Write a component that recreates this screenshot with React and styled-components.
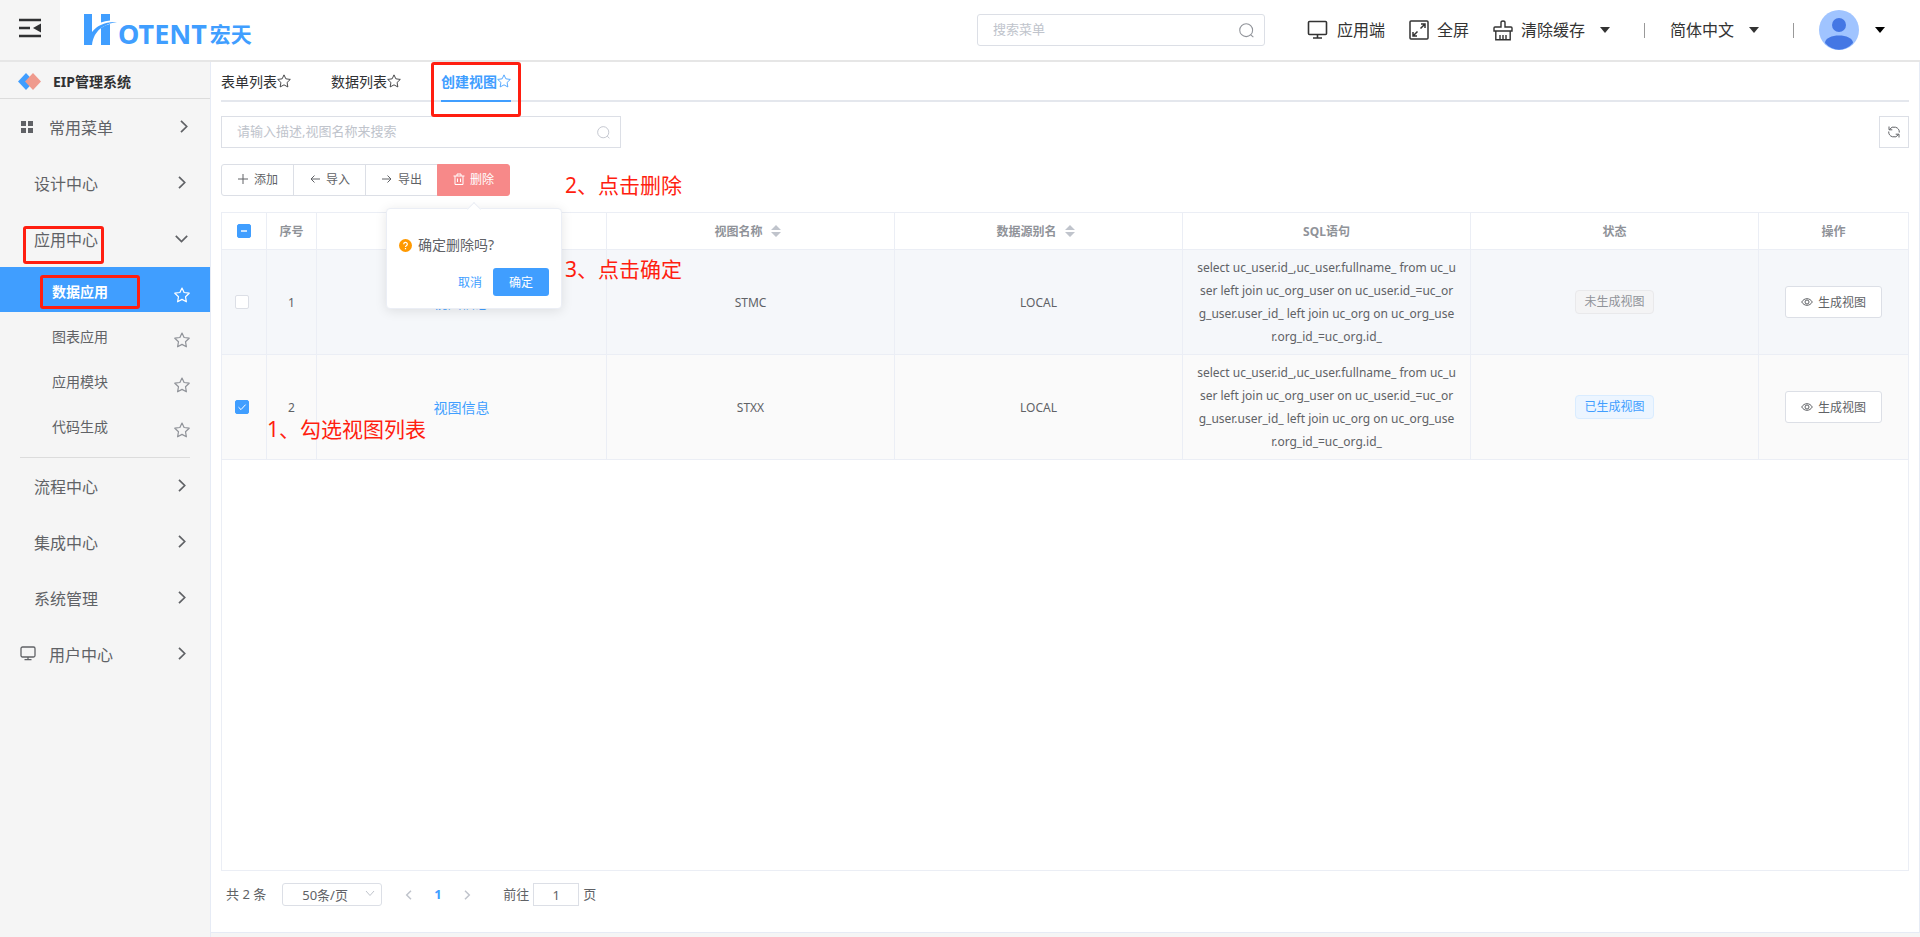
import React, { useState } from "react";
import styled, { createGlobalStyle, css } from "styled-components";

const GlobalStyle = createGlobalStyle`
  * {
    box-sizing: border-box;
  }
  body {
    margin: 0;
    color: #606266;
    background: #f5f5f5;
  }
  body, button, input, select {
    font-family: "Noto Sans", "Noto Sans CJK SC", sans-serif;
  }
  button {
    cursor: pointer;
  }
  a {
    color: inherit;
    text-decoration: none;
  }
`;

const Page = styled.div`
  min-height: 100vh;
  display: flex;
  flex-direction: column;
`;

const Header = styled.header`
  height: 62px;
  display: flex;
  align-items: center;
  background: #fff;
  border-bottom: 2px solid #e6e6e6;
  color: #333;
`;

const MenuToggle = styled.button`
  width: 60px;
  height: 60px;
  padding: 0;
  border: none;
  background: #f5f5f5;
`;

const Logo = styled.a`
  display: flex;
  align-items: center;
  margin-left: 24px;
  color: #409eff;
  font-weight: 700;
  line-height: 30px;
  .latin {
    font-size: 27px;
    margin-top: 8px;
  }
  .cjk {
    font-size: 21px;
    margin-top: 8px;
    margin-left: 3px;
  }
`;

const SearchBox = styled.label`
  width: ${(p) => p.$width};
  height: 32px;
  display: flex;
  align-items: center;
  padding: 0 10px 0 15px;
  border: 1px solid #dcdfe6;
  border-radius: ${(p) => p.$radius || "0"};
  background: #fff;
  input {
    flex: 1;
    min-width: 0;
    padding: 0 0 2px;
    border: none;
    outline: none;
    font-size: 13px;
    color: #606266;
    &::placeholder {
      color: #c0c4cc;
    }
  }
`;

const HeaderSearch = styled.div`
  margin-left: auto;
  margin-right: 42px;
`;

const HeaderAction = styled.button`
  display: flex;
  align-items: center;
  gap: 8px;
  margin-right: 24px;
  padding: 0;
  border: none;
  background: none;
  font-size: 16px;
  line-height: 24px;
  color: #333;
`;

const Caret = styled.span`
  margin-left: 7px;
  border: 5px solid transparent;
  border-top: 6px solid ${(p) => p.$color || "#333"};
  border-bottom: none;
`;

const Separator = styled.span`
  width: 1px;
  height: 15px;
  margin: 0 25px 0 10px;
  background: #999;
`;

const UserButton = styled.button`
  display: flex;
  align-items: center;
  gap: 9px;
  margin-right: 35px;
  padding: 0;
  border: none;
  background: none;
`;

const Body = styled.div`
  flex: 1;
  display: flex;
`;

const Sidebar = styled.nav`
  width: 211px;
  flex-shrink: 0;
  border-right: 1px solid #e6ebf5;
  background: #f5f5f5;
`;

const SystemTitle = styled.div`
  height: 37px;
  display: flex;
  align-items: center;
  gap: 12px;
  padding: 2px 0 0 18px;
  border-bottom: 1px solid #dcdcdc;
  font-size: 14px;
  font-weight: 700;
  color: #303133;
`;

const MenuItem = styled.button`
  position: relative;
  width: 100%;
  height: 56px;
  display: flex;
  align-items: center;
  padding: 0 ${(p) => (p.$wide ? "22px" : "24px")} 1px ${(p) => (p.$top ? "20px" : "34px")};
  border: none;
  background: none;
  font-size: 16px;
  color: #606266;
  .icon {
    width: 29px;
    display: flex;
  }
  .arrow {
    margin-left: auto;
  }
`;

const SubItem = styled.a`
  position: relative;
  height: 45px;
  display: flex;
  align-items: center;
  justify-content: space-between;
  padding: 3px 20px 0 52px;
  font-size: 14px;
  color: ${(p) => (p.$active ? "#fff" : "#606266")};
  background: ${(p) => (p.$active ? "#409eff" : "none")};
  font-weight: ${(p) => (p.$active ? 700 : 400)};
  svg {
    margin-top: 8px;
    color: ${(p) => (p.$active ? "#fff" : "#909399")};
  }
`;

const Divider = styled.hr`
  height: 1px;
  margin: 10px 20px 0;
  border: none;
  background: #dcdcdc;
`;

const Main = styled.main`
  flex: 1;
  min-width: 0;
  display: flex;
  flex-direction: column;
  margin-bottom: 4px;
  padding: 0 10px;
  border: 1px solid #e6ebf5;
  border-width: 0 1px 1px 0;
  background: #fff;
`;

const Tabs = styled.div`
  display: flex;
  gap: 40px;
  height: 40px;
  border-bottom: 2px solid #e4e7ed;
`;

const Tab = styled.a`
  position: relative;
  height: 40px;
  display: flex;
  align-items: center;
  font-size: 14px;
  color: ${(p) => (p.$active ? "#409eff" : "#303133")};
  border-bottom: 2px solid ${(p) => (p.$active ? "#409eff" : "transparent")};
  font-weight: ${(p) => (p.$active ? 700 : 400)};
`;

const Toolbar = styled.div`
  display: flex;
  justify-content: space-between;
  margin-top: 14px;
`;

const RefreshButton = styled.button`
  width: 30px;
  height: 32px;
  display: flex;
  align-items: center;
  justify-content: center;
  padding: 0;
  border: 1px solid #dcdfe6;
  background: #fff;
  color: #606266;
`;

const ButtonRow = styled.div`
  position: relative;
  align-self: flex-start;
  display: flex;
  margin: 16px 0;
`;

const ToolButton = styled.button`
  width: 73px;
  height: 32px;
  display: flex;
  align-items: center;
  justify-content: center;
  gap: 5px;
  padding: 0 0 2px;
  font-size: 12px;
  color: #606266;
  border: 1px solid #dcdfe6;
  background: #fff;
  & + & {
    margin-left: -1px;
  }
  &:first-child {
    border-radius: 3px 0 0 3px;
  }
  ${(p) =>
    p.$danger &&
    css`
      color: #fff;
      background: #f78989;
      border-color: #f78989;
      border-radius: 0 3px 3px 0;
    `}
`;

const Popover = styled.div`
  position: absolute;
  z-index: 5;
  top: 44px;
  right: -52px;
  width: 176px;
  padding: 26px 12px 12px;
  border: 1px solid #ebeef5;
  border-radius: 4px;
  background: #fff;
  box-shadow: 0 2px 12px rgba(0, 0, 0, 0.1);
  &::before {
    content: "";
    position: absolute;
    top: -5px;
    left: 82px;
    width: 9px;
    height: 9px;
    border: 1px solid #ebeef5;
    border-width: 1px 0 0 1px;
    background: #fff;
    transform: rotate(45deg);
  }
  p {
    display: flex;
    align-items: center;
    gap: 6px;
    margin: 0 0 13px;
    font-size: 14px;
    line-height: 20px;
  }
  footer {
    display: flex;
    justify-content: flex-end;
    gap: 11px;
  }
`;

const SmallButton = styled.button`
  height: 28px;
  padding: 0 ${(p) => (p.$primary ? "16px" : "0")};
  border: none;
  border-radius: 3px;
  font-size: 12px;
  color: ${(p) => (p.$primary ? "#fff" : "#409eff")};
  background: ${(p) => (p.$primary ? "#409eff" : "none")};
`;

const TableWrap = styled.div`
  position: relative;
  flex: 1;
  border: 1px solid #ebeef5;
`;

const Table = styled.table`
  width: 100%;
  table-layout: fixed;
  border-collapse: separate;
  border-spacing: 0;
  font-size: 12px;
  line-height: 23px;
  text-align: center;
  th,
  td {
    border-right: 1px solid #ebeef5;
    border-bottom: 1px solid #ebeef5;
    &:last-child {
      border-right: none;
    }
  }
  th {
    height: 37px;
    padding: 0;
    color: #909399;
    font-weight: 700;
  }
  td {
    padding: 6px 10px;
  }
  a {
    display: block;
    font-size: 14px;
    color: #409eff;
  }
`;

const Row = styled.tr`
  background: ${(p) => (p.$hover ? "#f5f7fa" : "#fafafa")};
`;

const SortHead = styled.span`
  display: inline-flex;
  align-items: center;
  gap: 8px;
  padding-right: 6px;
`;

const Checkbox = styled.input`
  appearance: none;
  display: block;
  width: 14px;
  height: 14px;
  margin: 0 auto;
  border: 1px solid #dcdfe6;
  border-radius: 2px;
  background: #fff;
  transform: translateX(${(p) => (p.$head ? "0" : "-2px")});
  &:checked {
    border-color: #409eff;
    background: #409eff
      url("data:image/svg+xml,%3Csvg xmlns='http://www.w3.org/2000/svg' viewBox='0 0 12 12'%3E%3Cpath d='M2.5 6.2 5 8.6 9.6 3.6' fill='none' stroke='white'/%3E%3C/svg%3E");
  }
  &:indeterminate {
    border-color: #409eff;
    background: linear-gradient(#c6e2ff, #c6e2ff) center / 6px 2px no-repeat #409eff;
  }
`;

const Tag = styled.span`
  display: inline-block;
  height: 24px;
  padding: 0 8px;
  border: 1px solid ${(p) => (p.$done ? "#d9ecff" : "#e9e9eb")};
  border-radius: 4px;
  line-height: 22px;
  color: ${(p) => (p.$done ? "#409eff" : "#909399")};
  background: ${(p) => (p.$done ? "#ecf5ff" : "#f4f4f5")};
`;

const RowButton = styled.button`
  height: 32px;
  display: inline-flex;
  align-items: center;
  gap: 5px;
  padding: 0 15px;
  border: 1px solid #dcdfe6;
  border-radius: 3px;
  background: #fff;
  font-size: 12px;
  color: #606266;
`;

const Pagination = styled.div`
  display: flex;
  align-items: center;
  padding: 12px 5px 26px;
  font-size: 13px;
  line-height: 23px;
`;

const SizeSelect = styled.div`
  position: relative;
  margin: 0 23px 0 16px;
  select {
    appearance: none;
    display: block;
    width: 100px;
    height: 23px;
    padding: 0 0 0 19px;
    border: 1px solid #dcdfe6;
    border-radius: 3px;
    background: #fff;
    font-size: 13px;
    color: #606266;
  }
  svg {
    position: absolute;
    right: 7px;
    top: 6px;
    pointer-events: none;
  }
`;

const PageButton = styled.button`
  min-width: 8px;
  display: flex;
  padding: 0;
  border: none;
  background: none;
  font-size: 13px;
  line-height: 23px;
  font-weight: 700;
  color: ${(p) => (p.$active ? "#409eff" : "#c0c4cc")};
`;

const Pager = styled.div`
  display: flex;
  align-items: center;
  gap: 21px;
  margin-right: 32px;
`;

const JumpLabel = styled.label`
  display: flex;
  align-items: center;
  gap: 4px;
  input {
    width: 46px;
    height: 23px;
    padding: 0;
    border: 1px solid #dcdfe6;
    font-size: 13px;
    text-align: center;
    color: #606266;
  }
`;

// red guide marks drawn over the page
const Mark = styled.span`
  position: absolute;
  z-index: 3;
  top: ${(p) => p.$top};
  left: ${(p) => p.$left};
  width: ${(p) => p.$width};
  height: ${(p) => p.$height};
  border: 3px solid #ff1e10;
  border-radius: 3px;
  pointer-events: none;
`;

const Note = styled.span`
  position: absolute;
  z-index: 3;
  top: ${(p) => p.$top};
  left: ${(p) => p.$left};
  font-size: 21px;
  line-height: 30px;
  white-space: nowrap;
  color: #ff1e10;
`;

const Svg = ({ size = 14, w, h, box, sw = 1, children, ...rest }) => (
  <svg
    width={w || size}
    height={h || size}
    viewBox={box || `0 0 ${w || size} ${h || size}`}
    fill="none"
    stroke="currentColor"
    strokeWidth={sw}
    aria-hidden="true"
    {...rest}
  >
    {children}
  </svg>
);

const StarIcon = ({ size = 16, sw = 1.2 }) => (
  <Svg size={size} box="0 0 16 16" sw={sw} strokeLinejoin="round">
    <path d="M8 1 10.1 5.5 15.2 6.2 11.5 9.7 12.4 14.8 8 12.4 3.6 14.8 4.5 9.7.8 6.2 5.9 5.5Z" />
  </Svg>
);

const SearchIcon = ({ size, color }) => (
  <Svg size={size} box="0 0 14 14" color={color}>
    <circle cx="6.7" cy="6.7" r="6" />
    <path d="m11 11 2.4 2.2" />
  </Svg>
);

const ArrowIcon = ({ open }) =>
  open ? (
    <Svg className="arrow" w={13} h={8} sw={1.7}>
      <path d="M.8.8 6.5 6.6 12.2.8" />
    </Svg>
  ) : (
    <Svg className="arrow" w={8} h={13} sw={1.7}>
      <path d="M1 .8 6.7 6.5 1 12.2" />
    </Svg>
  );

const MonitorIcon = () => (
  <Svg w={16} h={15} sw={1.3}>
    <rect x="1" y="1" width="14" height="10" rx="1.5" />
    <path d="M8 11v2.5M4.5 13.7h7" />
  </Svg>
);

const GridIcon = () => (
  <Svg w={14} h={14}>
    <path stroke="none" fill="currentColor" d="M1 1h5v5H1zM8 1h5v5H8zM1 8h5v5H1zM8 8h5v5H8z" />
  </Svg>
);

const EyeIcon = () => (
  <Svg size={12}>
    <path d="M.7 6C3.3 1.6 8.7 1.6 11.3 6 8.7 10.4 3.3 10.4.7 6Z" />
    <circle cx="6" cy="6" r="2" />
  </Svg>
);

const SortIcon = () => (
  <Svg w={10} h={12} color="#c0c4cc">
    <path stroke="none" fill="currentColor" d="M0 5 5 0l5 5zM0 7h10l-5 5z" />
  </Svg>
);

const subMenus = ["数据应用", "图表应用", "应用模块", "代码生成"];

const sql = [
  "select uc_user.id_,uc_user.fullname_ from uc_u",
  "ser left join uc_org_user on uc_user.id_=uc_or",
  "g_user.user_id_ left join uc_org on uc_org_use",
  "r.org_id_=uc_org.id_",
];

const rows = [
  { id: 1, desc: "视图信息", name: "STMC", source: "LOCAL", done: false },
  { id: 2, desc: "视图信息", name: "STXX", source: "LOCAL", done: true },
];

function TopBar() {
  return (
    <Header>
      <MenuToggle aria-label="收起菜单">
        <Svg w={22} h={20} sw={2.6} color="#303133">
          <path d="M0 2h22M0 10h11M0 18h22" />
          <path d="M22 5.5v9L14 10z" fill="currentColor" stroke="none" />
        </Svg>
      </MenuToggle>
      <Logo href="#">
        <Svg w={34} h={32} color="#409eff">
          <g fill="currentColor" stroke="none">
            <path d="M0 0h8v18C13 12 20 7.5 33 8 20 10 10 16 8 31H0z" />
            <path d="M17 0h9v6.5q-5 .3-9 2z" />
            <path d="M17 14q4-3 9-4v21h-9z" />
          </g>
        </Svg>
        <span className="latin">OTENT</span>
        <span className="cjk">宏天</span>
      </Logo>
      <HeaderSearch>
        <SearchBox $width="288px" $radius="3px">
          <input type="text" placeholder="搜索菜单" aria-label="搜索菜单" />
          <SearchIcon size={15} color="#909399" />
        </SearchBox>
      </HeaderSearch>
      <HeaderAction>
        <Svg w={22} h={20} sw={1.6}>
          <rect x="1.5" y="1.5" width="18" height="13" rx="1" />
          <path d="M10.5 14v4M6 18h9" />
        </Svg>
        应用端
      </HeaderAction>
      <HeaderAction>
        <Svg size={20} sw={1.5}>
          <rect x="1" y="1" width="18" height="18" rx="1" />
          <path d="M11.5 8.5 16 4M12 4h4v4M8.5 11.5 4 16M4 12v4h4" />
        </Svg>
        全屏
      </HeaderAction>
      <HeaderAction>
        <Svg w={20} h={21} sw={1.4}>
          <path d="M8 7V2.5Q8 1 10 1t2 1.5V7h6q1 0 1 1v3H1V8q0-1 1-1z" />
          <path d="M2.8 11v8.7h14.4V11M7 19v-4M10 19v-4M13 19v-4" />
        </Svg>
        清除缓存
        <Caret />
      </HeaderAction>
      <Separator />
      <HeaderAction>
        简体中文
        <Caret />
      </HeaderAction>
      <Separator />
      <UserButton aria-label="用户">
        <Svg size={40} stroke="none">
          <circle cx="20" cy="20" r="20" fill="#a0c4ff" />
          <circle cx="20" cy="15" r="7" fill="#4477e4" />
          <path d="M6 33C6 23 34 23 34 33 26 42 14 42 6 33Z" fill="#4477e4" />
        </Svg>
        <Caret $color="#000" />
      </UserButton>
    </Header>
  );
}

function SideMenu() {
  return (
    <Sidebar>
      <SystemTitle>
        <Svg w={23} h={17} stroke="none">
          <path d="M8 0 16 8.5 8 17 0 8.5z" fill="#409eff" />
          <path d="M15 0 23 8.5 15 17 7 8.5z" fill="#ef9a8d" />
        </Svg>
        EIP管理系统
      </SystemTitle>
      <MenuItem $top $wide>
        <span className="icon">
          <GridIcon />
        </span>
        常用菜单
        <ArrowIcon />
      </MenuItem>
      <MenuItem>
        设计中心
        <ArrowIcon />
      </MenuItem>
      <MenuItem $wide>
        应用中心
        <ArrowIcon open />
        <Mark $top="15px" $left="23px" $width="81px" $height="38px" />
      </MenuItem>
      {subMenus.map((name, i) => (
        <SubItem key={name} href="#" $active={i === 0}>
          {name}
          <StarIcon />
          {i === 0 && <Mark $top="8px" $left="40px" $width="100px" $height="34px" />}
        </SubItem>
      ))}
      <Divider />
      {["流程中心", "集成中心", "系统管理"].map((name) => (
        <MenuItem key={name}>
          {name}
          <ArrowIcon />
        </MenuItem>
      ))}
      <MenuItem $top>
        <span className="icon">
          <MonitorIcon />
        </span>
        用户中心
        <ArrowIcon />
      </MenuItem>
    </Sidebar>
  );
}

function ViewTable() {
  const [checked, setChecked] = useState([2]);

  function toggleRow(id) {
    setChecked(checked.includes(id) ? checked.filter((c) => c !== id) : [...checked, id]);
  }

  function toggleAll() {
    setChecked(checked.length === rows.length ? [] : rows.map((r) => r.id));
  }

  const all = checked.length === rows.length;

  return (
    <TableWrap>
      <Table>
        <colgroup>
          <col width="45" />
          <col width="50" />
          <col width="290" />
          <col />
          <col />
          <col />
          <col />
          <col width="149" />
        </colgroup>
        <thead>
          <tr>
            <th>
              <Checkbox
                type="checkbox"
                aria-label="全选"
                $head
                checked={all}
                onChange={toggleAll}
                ref={(el) => {
                  if (el) el.indeterminate = checked.length > 0 && !all;
                }}
              />
            </th>
            <th>序号</th>
            <th />
            <th>
              <SortHead>
                视图名称 <SortIcon />
              </SortHead>
            </th>
            <th>
              <SortHead>
                数据源别名 <SortIcon />
              </SortHead>
            </th>
            <th>SQL语句</th>
            <th>状态</th>
            <th>操作</th>
          </tr>
        </thead>
        <tbody>
          {rows.map((row) => (
            <Row key={row.id} $hover={row.id === 1}>
              <td>
                <Checkbox
                  type="checkbox"
                  aria-label={row.name}
                  checked={checked.includes(row.id)}
                  onChange={() => toggleRow(row.id)}
                />
              </td>
              <td>{row.id}</td>
              <td>
                <a href="#">{row.desc}</a>
              </td>
              <td>{row.name}</td>
              <td>{row.source}</td>
              <td>
                {sql.map((line) => (
                  <div key={line}>{line}</div>
                ))}
              </td>
              <td>
                <Tag $done={row.done}>{row.done ? "已生成视图" : "未生成视图"}</Tag>
              </td>
              <td>
                <RowButton>
                  <EyeIcon />
                  生成视图
                </RowButton>
              </td>
            </Row>
          ))}
        </tbody>
      </Table>
      <Note $top="41px" $left="343px">
        3、点击确定
      </Note>
      <Note $top="201px" $left="45px">
        1、勾选视图列表
      </Note>
    </TableWrap>
  );
}

export default function App() {
  const [showConfirm, setShowConfirm] = useState(true);

  return (
    <Page>
      <GlobalStyle />
      <TopBar />
      <Body>
        <SideMenu />
        <Main>
          <Tabs>
            {["表单列表", "数据列表", "创建视图"].map((name, i) => (
              <Tab key={name} href="#" $active={i === 2}>
                {name}
                <StarIcon size={14} sw={1} />
                {i === 2 && <Mark $top="0" $left="-10px" $width="90px" $height="55px" />}
              </Tab>
            ))}
          </Tabs>
          <Toolbar>
            <SearchBox $width="400px">
              <input type="text" placeholder="请输入描述,视图名称来搜索" aria-label="搜索视图" />
              <SearchIcon size={13} color="#c0c4cc" />
            </SearchBox>
            <RefreshButton aria-label="刷新">
              <Svg size={14}>
                <path d="M2.5 4.5A5.3 5.3 0 0 1 12.3 7.5M11.5 9.5A5.3 5.3 0 0 1 1.7 6.5M2 1.5v3.3h3.3M12 12.5V9.2H8.7" />
              </Svg>
            </RefreshButton>
          </Toolbar>
          <ButtonRow>
            <ToolButton>
              <Svg size={12}>
                <path d="M6 1v10M1 6h10" />
              </Svg>
              添加
            </ToolButton>
            <ToolButton>
              <Svg size={12}>
                <path d="M11 6H2M5.5 2.5 2 6l3.5 3.5" />
              </Svg>
              导入
            </ToolButton>
            <ToolButton>
              <Svg size={12}>
                <path d="M1 6h9M6.5 2.5 10 6 6.5 9.5" />
              </Svg>
              导出
            </ToolButton>
            <ToolButton $danger onClick={() => setShowConfirm(true)}>
              <Svg size={12}>
                <path d="M.5 3h11M2 3v8.5h8V3M4 3V1h4v2M4.5 5.5v3.5M7.5 5.5v3.5" />
              </Svg>
              删除
            </ToolButton>
            <Note $top="6px" $left="344px">
              2、点击删除
            </Note>
            {showConfirm && (
              <Popover role="dialog" aria-label="确定删除吗?">
                <p>
                  <Svg size={13} stroke="none">
                    <circle cx="6.5" cy="6.5" r="6.5" fill="#ff9900" />
                    <path
                      d="M4.7 5.2a1.8 1.8 0 1 1 2.7 1.5q-.9.5-.9 1.2M6.5 9v1.3"
                      stroke="#fff"
                      strokeWidth="1.2"
                    />
                  </Svg>
                  确定删除吗?
                </p>
                <footer>
                  <SmallButton onClick={() => setShowConfirm(false)}>取消</SmallButton>
                  <SmallButton $primary onClick={() => setShowConfirm(false)}>
                    确定
                  </SmallButton>
                </footer>
              </Popover>
            )}
          </ButtonRow>
          <ViewTable />
          <Pagination>
            共 2 条
            <SizeSelect>
              <select aria-label="每页条数" defaultValue="50">
                <option value="50">50条/页</option>
                <option value="100">100条/页</option>
              </select>
              <Svg w={10} h={10} color="#c0c4cc">
                <path d="m1 2 4 4.5L9 2" />
              </Svg>
            </SizeSelect>
            <Pager>
              <PageButton aria-label="上一页">
                <Svg w={8} h={10} sw={1.5}>
                  <path d="M6 .7 1.7 5 6 9.3" />
                </Svg>
              </PageButton>
              <PageButton $active>1</PageButton>
              <PageButton aria-label="下一页">
                <Svg w={8} h={10} sw={1.5}>
                  <path d="M2 .7 6.3 5 2 9.3" />
                </Svg>
              </PageButton>
            </Pager>
            <JumpLabel>
              前往
              <input type="text" defaultValue="1" />
              页
            </JumpLabel>
          </Pagination>
        </Main>
      </Body>
    </Page>
  );
}
